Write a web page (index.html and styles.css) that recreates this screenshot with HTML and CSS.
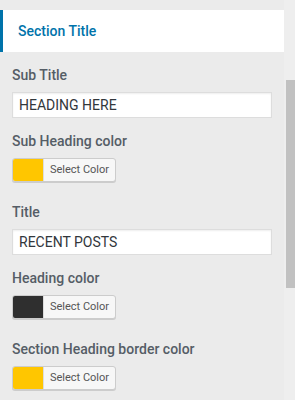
FILE: index.html
```html
<!DOCTYPE html>
<html lang="en">

<head>
    <meta charset="UTF-8">
    <meta name="viewport" content="width=device-width, initial-scale=1">
    <title>Section Title</title>
    <link rel="stylesheet" href="styles.css">
</head>

<body>

    <div class="wrap">
        <div class="panel">
            <h3 class="section-title">Section Title</h3>

            <div class="field">
                <label class="label">Sub Title</label>
                <input type="text" class="text-input" value="HEADING HERE">
            </div>

            <div class="field">
                <label class="label">Sub Heading color</label>
                <button class="color-btn"><span class="swatch yellow"></span><span class="btn-text">Select Color</span></button>
            </div>

            <div class="field after-color">
                <label class="label">Title</label>
                <input type="text" class="text-input" value="RECENT POSTS">
            </div>

            <div class="field">
                <label class="label">Heading color</label>
                <button class="color-btn"><span class="swatch dark"></span><span class="btn-text">Select Color</span></button>
            </div>

            <div class="field after-color">
                <label class="label">Section Heading border color</label>
                <button class="color-btn"><span class="swatch yellow"></span><span class="btn-text">Select Color</span></button>
            </div>
        </div>

        <div class="scrollbar">
            <div class="thumb"></div>
        </div>
    </div>

</body>

</html>
```

FILE: styles.css
```css
body {
    margin: 0;
    font-family: Roboto, "Liberation Sans", sans-serif;
    background: #eeeeee;
}

.wrap {
    display: flex;
    height: 400px;
}

.panel {
    width: 284px;
    padding-top: 10px;
    background: #ebebeb;
}

.section-title {
    margin: 0;
    height: 42px;
    line-height: 42px;
    padding-left: 15px;
    background: #fff;
    border-left: 3px solid #0073aa;
    color: #0073aa;
    font-size: 14px;
    font-weight: 500;
}

.field {
    padding: 0 12px;
    margin-top: 13px;
}

.field.after-color {
    margin-top: 20px;
}

.label {
    display: block;
    line-height: 20px;
    font-size: 14px;
    font-weight: 500;
    color: #555d66;
    margin-bottom: 7px;
}

.text-input {
    display: block;
    width: 100%;
    height: 26px;
    box-sizing: border-box;
    padding: 0 6px;
    border: 1px solid #ddd;
    background: #fff;
    box-shadow: inset 0 1px 2px rgba(0, 0, 0, 0.07);
    font-family: Roboto, "Liberation Sans", sans-serif;
    font-size: 14px;
    color: #32373c;
    outline: none;
}

.color-btn {
    display: flex;
    align-items: stretch;
    width: 104px;
    height: 24px;
    padding: 0;
    border: 1px solid #ccc;
    border-radius: 3px;
    background: #f7f7f7;
    box-shadow: 0 1px 0 #ccc;
    overflow: hidden;
    cursor: pointer;
}

.swatch {
    width: 30px;
    border-right: 1px solid #ddd;
}

.yellow {
    background: #ffc600;
}

.dark {
    background: #2f2f2f;
}

.btn-text {
    flex: 1;
    line-height: 22px;
    font-family: Roboto, "Liberation Sans", sans-serif;
    font-size: 11px;
    color: #555;
    text-align: center;
}

.scrollbar {
    width: 11px;
    padding-top: 80px;
    background: #eeeeee;
}

.thumb {
    margin-left: 2px;
    height: 208px;
    background: #c1c1c1;
}
```
